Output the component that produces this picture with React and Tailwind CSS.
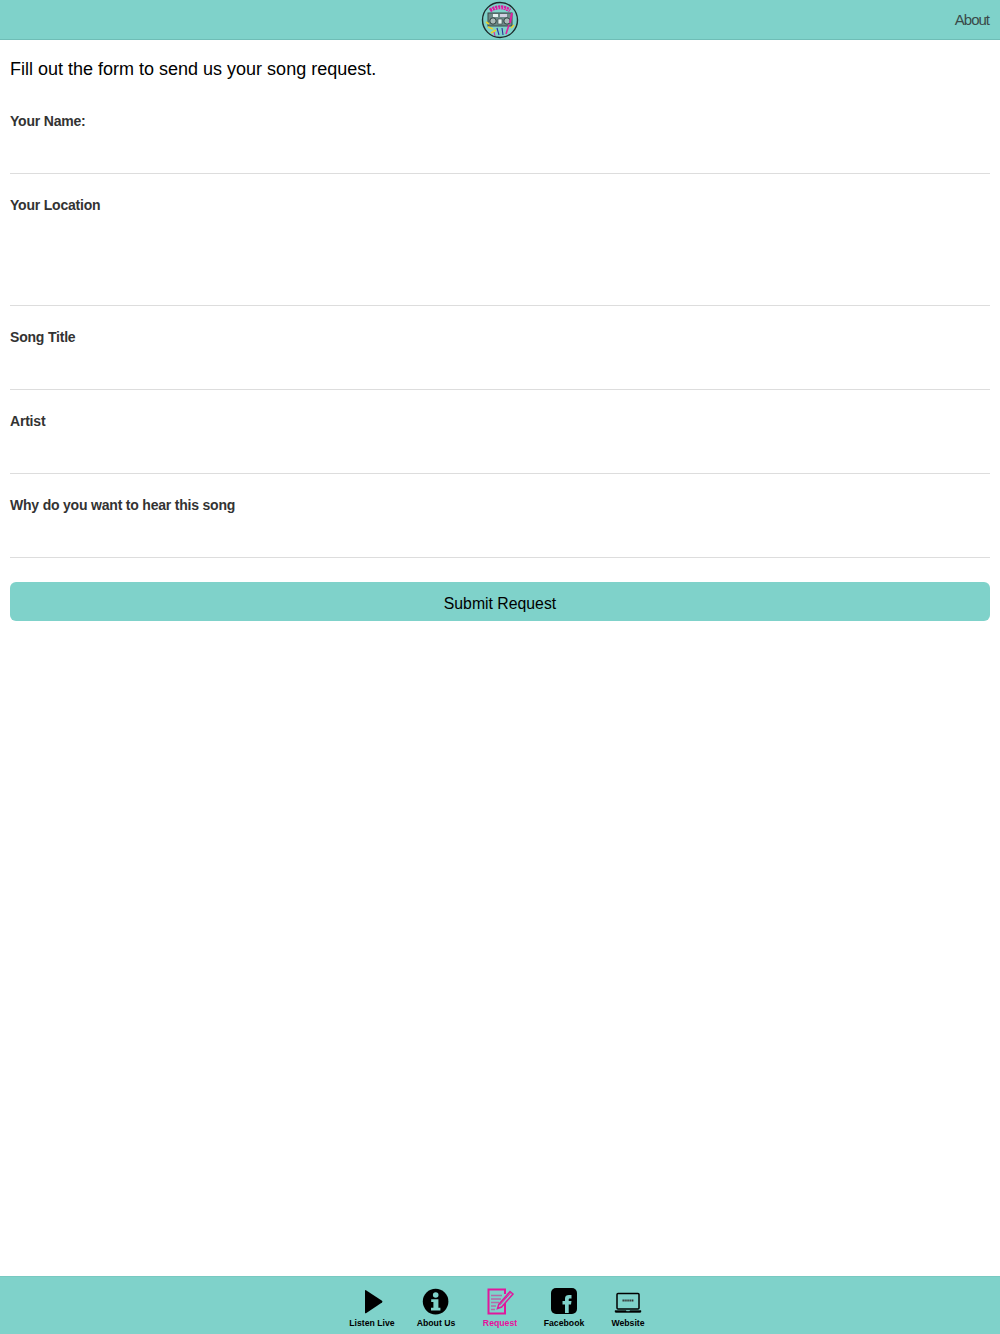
const font = { fontFamily: '"Liberation Sans", Arial, sans-serif' };

function Logo() {
  return (
    <svg width="38" height="38" viewBox="0 0 38 38">
      <circle cx="19" cy="19" r="17.5" fill="#7fd2ca" stroke="#1c2b2b" strokeWidth="1.4" />
      <path d="M9 9.5 Q19 3 29 9.5" fill="none" stroke="#d81ba0" strokeWidth="4" strokeDasharray="2.2 0.7" />
      <path d="M11 9 Q19 5 27 9" fill="none" stroke="#e9a9d6" strokeWidth="1" strokeDasharray="1 2" />
      <rect x="7" y="12" width="24" height="13" fill="#6d8a88" stroke="#3a4a49" strokeWidth="1" />
      <rect x="12" y="13" width="5" height="3" fill="#e6f2f0" />
      <rect x="19" y="13" width="7" height="3" fill="#d2cfe0" />
      <circle cx="12" cy="20" r="3.2" fill="#a9bab8" stroke="#30403f" strokeWidth="1" />
      <circle cx="26" cy="20" r="3.2" fill="#a9bab8" stroke="#30403f" strokeWidth="1" />
      <rect x="17" y="18" width="4" height="5" fill="#e6f2f0" stroke="#30403f" strokeWidth="0.6" />
      <path d="M31 12 L29 22" stroke="#e0219f" strokeWidth="2" />
      <path d="M28 24 L25 33" stroke="#e0219f" strokeWidth="1.6" />
      <path d="M7 26 L12 28 M10 32 L15 29 M5 21 L8 23" stroke="#e8d32c" strokeWidth="1.6" />
      <path d="M16 27 L18 34 M21 27 L22 34" stroke="#2b2f9a" strokeWidth="1.1" />
      <path d="M13 31 L14 35" stroke="#e0219f" strokeWidth="1" />
      <path d="M30 27 L33 24" stroke="#e8d32c" strokeWidth="1.4" />
    </svg>
  );
}

function PlayIcon() {
  return (
    <svg width="30" height="30" viewBox="0 0 30 30">
      <path d="M9 3.2 L25 13.8 Q26 14.7 25 15.6 L9 26.2 Q8 26.7 8 25.7 L8 3.7 Q8 2.7 9 3.2 Z" fill="#000" />
    </svg>
  );
}

function InfoIcon() {
  return (
    <svg width="30" height="30" viewBox="0 0 30 30">
      <circle cx="14.6" cy="14.6" r="12.8" fill="#000" />
      <circle cx="14.7" cy="8" r="2.8" fill="#7fd2ca" />
      <path d="M10.2 12.2 H17.4 V20.8 H19.4 V23.6 H10 V20.8 H12.4 V15 H10.2 Z" fill="#7fd2ca" />
    </svg>
  );
}

function RequestIcon() {
  return (
    <svg width="30" height="30" viewBox="0 0 30 30" fill="none">
      <path d="M20 16 V26.5 H3.5 V2.5 H20 V7" stroke="#e0189c" strokeWidth="2" />
      <path d="M6 8.5 H17 M6 12 H16 M6 15.5 H14 M6 19 H11 M6 22.5 H10" stroke="#b46aa8" strokeWidth="1.5" />
      <path d="M12.5 21.5 L13.8 17.5 L25 4.5 L28 7 L16.6 20 Z" stroke="#e0189c" strokeWidth="1.5" fill="#7fd2ca" />
      <path d="M15 17.8 L25.5 6" stroke="#e0189c" strokeWidth="1" />
    </svg>
  );
}

function FacebookIcon() {
  return (
    <svg width="30" height="30" viewBox="0 0 30 30">
      <rect x="2" y="1" width="26" height="26" rx="5" fill="#000" />
      <path d="M16 26 V17.5 H13.5 V14 H16 V11.5 C16 9 17.5 8 20 8 H22.5 V11.5 H21 C20 11.5 19.7 12 19.7 12.7 V14 H22.5 L22 17.5 H19.7 V26 Z" fill="#7fd2ca" />
    </svg>
  );
}

function WebsiteIcon() {
  return (
    <svg width="30" height="30" viewBox="0 0 30 30" fill="none">
      <rect x="4" y="6.5" width="22" height="15.5" rx="1" stroke="#000" strokeWidth="1.5" />
      <path d="M9.5 13.5 H20.5" stroke="#333" strokeWidth="1.8" strokeDasharray="1.4 0.5" />
      <path d="M2 23.6 H13 L13.6 24.2 H16.4 L17 23.6 H28 V24.5 Q28 25.5 27 25.5 H3 Q2 25.5 2 24.5 Z" fill="#000" stroke="#000" strokeWidth="0.4" />
    </svg>
  );
}

function Field({ label, tall }) {
  return (
    <div className={`pt-[21px] border-b border-[#dddddd] ${tall ? "h-[132px]" : "h-[84px]"}`}>
      <label className="block text-[14px] leading-5 tracking-[-0.2px] font-bold text-[#333333]">{label}</label>
    </div>
  );
}

function Tab({ label, active, children }) {
  return (
    <div className={`w-16 flex flex-col items-center ${active ? "text-[#e6109c]" : "text-black"}`}>
      <div className="h-[30px]">{children}</div>
      <span className="-mt-px text-[8.7px] leading-[14px] font-bold whitespace-nowrap">{label}</span>
    </div>
  );
}

export default function App() {
  return (
    <div style={font} className="h-[1334px] flex flex-col bg-white overflow-hidden">
      <header className="relative h-10 shrink-0 bg-[#7fd2ca] border-b border-[#6fbdb6] flex items-center justify-center">
        <Logo />
        <a className="absolute right-[11px] top-[10px] text-[15px] leading-5 tracking-[-1px] text-[#3a4a49]">About</a>
      </header>

      <main className="flex-1 px-[10px]">
        <h1 className="mt-[19px] text-[18px] leading-5 font-normal text-black">Fill out the form to send us your song request.</h1>
        <form className="mt-[11px]">
          <Field label="Your Name:" />
          <Field label="Your Location" tall />
          <Field label="Song Title" />
          <Field label="Artist" />
          <Field label="Why do you want to hear this song" />
          <button type="button" className="mt-6 w-full h-[39px] pt-1 rounded-md bg-[#7fd2ca] text-[15.8px] text-black">Submit Request</button>
        </form>
      </main>

      <footer className="h-[58px] shrink-0 bg-[#7fd2ca] border-t border-[#78c9c1] pt-[10px] flex justify-center">
        <Tab label="Listen Live"><PlayIcon /></Tab>
        <Tab label="About Us"><InfoIcon /></Tab>
        <Tab label="Request" active><RequestIcon /></Tab>
        <Tab label="Facebook"><FacebookIcon /></Tab>
        <Tab label="Website"><WebsiteIcon /></Tab>
      </footer>
    </div>
  );
}
